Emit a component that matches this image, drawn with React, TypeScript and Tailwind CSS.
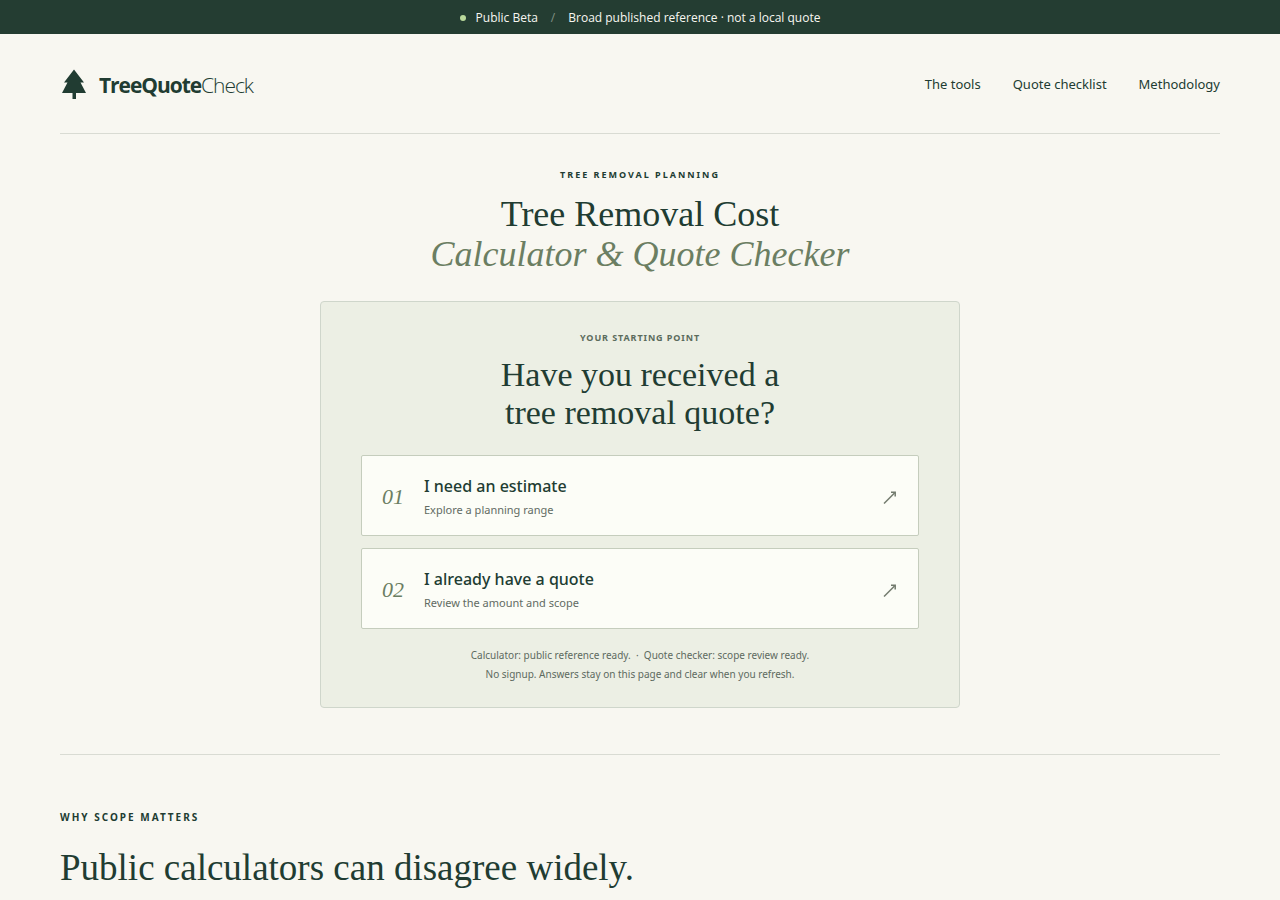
import React from 'react';

const NAV_LINKS = [
  { label: 'The tools', href: '#tools' },
  { label: 'Quote checklist', href: '#checklist' },
  { label: 'Methodology', href: '#methodology' },
];

const OPTIONS = [
  { num: '01', title: 'I need an estimate', text: 'Explore a planning range' },
  { num: '02', title: 'I already have a quote', text: 'Review the amount and scope' },
];

function TreeLogo() {
  return (
    <svg width="28" height="32" viewBox="0 0 28 32" fill="currentColor" aria-hidden="true">
      <path d="M14 0.5 L24 13.5 H20.5 L26 24 H16 V30 H12.5 V24 H2 L7.5 13.5 H4 Z" />
    </svg>
  );
}

function ArrowUpRight() {
  return (
    <svg width="14" height="14" viewBox="0 0 14 14" fill="none" stroke="currentColor" strokeWidth="1.5" aria-hidden="true">
      <path d="M2 13.5 L13 2.5" />
      <path d="M9 2.2 H13.2 V6.4" />
    </svg>
  );
}

function BetaBar() {
  return (
    <div className="flex h-[34px] items-center justify-center bg-[#243d32] pt-px font-['Open_Sans',sans-serif] text-xs font-medium text-[#f8f7f1]">
      <span className="mr-[10px] h-1.5 w-1.5 rounded-full bg-[#b9d99b]" />
      <span>Public Beta</span>
      <span className="mx-[13px] text-[#829184]">/</span>
      <span>Broad published reference · not a local quote</span>
    </div>
  );
}

function Header() {
  return (
    <header className="flex h-[100px] items-center justify-between border-b border-[#d9dbd3] pt-0.5">
      <a href="#top" className="flex items-center gap-[11px]">
        <TreeLogo />
        <span className="font-['Open_Sans',sans-serif] text-[21px] leading-8 tracking-tighter">
          <strong className="font-bold">TreeQuote</strong>
          <span className="font-light">Check</span>
        </span>
      </a>
      <nav className="flex gap-8 text-[13px]">
        {NAV_LINKS.map((link) => (
          <a key={link.href} href={link.href}>{link.label}</a>
        ))}
      </nav>
    </header>
  );
}

function StartCard() {
  return (
    <section className="mx-auto mt-[27px] w-full max-w-[640px] rounded border border-[#cfd6cb] bg-[#ecefe4] px-10 pt-7 pb-[23px] text-center">
      <p className="text-[9px] leading-4 font-bold tracking-widest text-[#5b6b5c]">YOUR STARTING POINT</p>
      <h2 className="mt-2.5 font-['Liberation_Serif',serif] text-[34px] leading-[38px]">
        Have you received a<br />tree removal quote?
      </h2>
      <div className="mt-[23px] flex flex-col gap-3">
        {OPTIONS.map((opt) => (
          <button
            key={opt.num}
            type="button"
            className="flex h-[81px] items-center rounded-xs border border-[#c5cdbd] bg-[#fcfdf7] px-5 pt-0.5 text-left"
          >
            <span className="mr-5 font-['Liberation_Serif',serif] text-[22px] text-[#6b7e62] italic">{opt.num}</span>
            <span className="flex-1 pt-0.5">
              <span className="block text-base leading-6 font-medium">{opt.title}</span>
              <span className="block text-[11px] leading-6 text-[#626b63]">{opt.text}</span>
            </span>
            <span className="mr-0.5 text-[#737b6e]">
              <ArrowUpRight />
            </span>
          </button>
        ))}
      </div>
      <p className="mt-[17px] text-[10px] leading-[19px] text-[#5d6a5f]">
        Calculator: public reference ready. &nbsp;·&nbsp; Quote checker: scope review ready.
        <br />
        No signup. Answers stay on this page and clear when you refresh.
      </p>
    </section>
  );
}

export default function App() {
  return (
    <div id="top" className="min-h-screen bg-[#f8f7f1] font-['Noto_Sans',sans-serif] text-[#213c32]">
      <BetaBar />
      <div className="mx-auto max-w-[1240px] px-10">
        <Header />
        <main>
          <div className="pt-[33px] text-center">
            <p className="text-[9px] leading-4 font-bold tracking-[2px]">TREE REMOVAL PLANNING</p>
            <h1 className="mt-[11px] font-['Liberation_Serif',serif] text-[36px] leading-10">
              Tree Removal Cost
              <em className="block text-[#6b7e62]">Calculator &amp; Quote Checker</em>
            </h1>
          </div>
          <StartCard />
          <section className="mt-[46px] border-t border-[#d9dbd3] pt-[54px]">
            <p className="text-[10px] leading-4 font-bold tracking-[2px]">WHY SCOPE MATTERS</p>
            <h2 className="mt-5 font-['Liberation_Serif',serif] text-[37px] leading-[46px]">
              Public calculators can disagree widely.
            </h2>
          </section>
        </main>
      </div>
    </div>
  );
}
